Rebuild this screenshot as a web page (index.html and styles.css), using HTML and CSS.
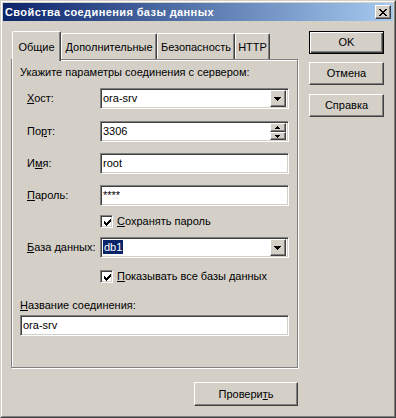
FILE: index.html
```html
<!DOCTYPE html>
<html>
<head>
<meta charset="utf-8">
<link rel="stylesheet" href="styles.css">
</head>
<body>
<div class="window">
  <div class="frame">
    <div class="titlebar">
      <span class="title">Свойства соединения базы данных</span>
      <div class="close raised">
        <svg width="8" height="7" viewBox="0 0 8 7" shape-rendering="crispEdges"><path d="M0 0h2v1h-2zM6 0h2v1h-2zM1 1h2v1h-2zM5 1h2v1h-2zM2 2h4v1h-4zM3 3h2v1h-2zM2 4h4v1h-4zM1 5h2v1h-2zM5 5h2v1h-2zM0 6h2v1h-2zM6 6h2v1h-2z" fill="#000"/></svg>
      </div>
    </div>
    <div class="body">
      <div class="left">
        <div class="tabs">
          <div class="tab active w1">Общие</div>
          <div class="tab w2">Дополнительные</div>
          <div class="tab w3">Безопасность</div>
          <div class="tab w4">HTTP</div>
        </div>
        <div class="panel">
          <div class="hint">Укажите параметры соединения с сервером:</div>
          <div class="row r-host">
            <span class="label"><u>Х</u>ост:</span>
            <div class="field sunken">
              <span class="value">ora-srv</span>
              <div class="dropbtn raised">
                <svg width="7" height="4" viewBox="0 0 7 4" shape-rendering="crispEdges"><path d="M0 0h7v1h-7zM1 1h5v1h-5zM2 2h3v1h-3zM3 3h1v1h-1z" fill="#000"/></svg>
              </div>
            </div>
          </div>
          <div class="row r-port">
            <span class="label">По<u>р</u>т:</span>
            <div class="field sunken">
              <span class="value">3306</span>
              <div class="spin">
                <div class="spinbtn raised"><svg width="5" height="3" viewBox="0 0 5 3" shape-rendering="crispEdges"><path d="M2 0h1v1h-1zM1 1h3v1h-3zM0 2h5v1h-5z" fill="#000"/></svg></div>
                <div class="spinbtn raised"><svg width="5" height="3" viewBox="0 0 5 3" shape-rendering="crispEdges"><path d="M0 0h5v1h-5zM1 1h3v1h-3zM2 2h1v1h-1z" fill="#000"/></svg></div>
              </div>
            </div>
          </div>
          <div class="row r-name">
            <span class="label">И<u>м</u>я:</span>
            <div class="field sunken"><span class="value">root</span></div>
          </div>
          <div class="row r-pass">
            <span class="label"><u>П</u>ароль:</span>
            <div class="field sunken"><span class="value">****</span></div>
          </div>
          <div class="check r-chk1">
            <div class="box sunken">
              <svg width="7" height="7" viewBox="0 0 7 7" shape-rendering="crispEdges"><path d="M6 0h1v1h-1zM5 1h2v1h-2zM0 2h1v1h-1zM4 2h3v1h-3zM0 3h2v1h-2zM3 3h3v1h-3zM0 4h5v1h-5zM1 5h3v1h-3zM2 6h1v1h-1z" fill="#000"/></svg>
            </div>
            <span><u>С</u>охранять пароль</span>
          </div>
          <div class="row r-db">
            <span class="label"><u>Б</u>аза данных:</span>
            <div class="field sunken">
              <span class="value"><span class="sel">db1</span></span>
              <div class="dropbtn raised">
                <svg width="7" height="4" viewBox="0 0 7 4" shape-rendering="crispEdges"><path d="M0 0h7v1h-7zM1 1h5v1h-5zM2 2h3v1h-3zM3 3h1v1h-1z" fill="#000"/></svg>
              </div>
            </div>
          </div>
          <div class="check r-chk2">
            <div class="box sunken">
              <svg width="7" height="7" viewBox="0 0 7 7" shape-rendering="crispEdges"><path d="M6 0h1v1h-1zM5 1h2v1h-2zM0 2h1v1h-1zM4 2h3v1h-3zM0 3h2v1h-2zM3 3h3v1h-3zM0 4h5v1h-5zM1 5h3v1h-3zM2 6h1v1h-1z" fill="#000"/></svg>
            </div>
            <span><u>П</u>оказывать все базы данных</span>
          </div>
          <div class="conn-label"><u>Н</u>азвание соединения:</div>
          <div class="field sunken wide-field"><span class="value">ora-srv</span></div>
        </div>
        <div class="footer">
          <div class="btn raised check-btn">Провери<u>т</u>ь</div>
        </div>
      </div>
      <div class="right">
        <div class="btn default">OK</div>
        <div class="btn raised b-cancel">Отмена</div>
        <div class="btn raised">Справка</div>
      </div>
    </div>
  </div>
</div>
</body>
</html>
```
FILE: styles.css
```css
* { box-sizing: border-box; }
html, body { margin: 0; padding: 0; background: #D4D0C8; }
body {
  font-family: "Liberation Sans", Arial, sans-serif;
  font-size: 11px;
  color: #000;
}
.window {
  width: 396px;
  height: 418px;
  border: 1px solid;
  border-color: #D4D0C8 #404040 #404040 #D4D0C8;
  background: #D4D0C8;
}
.frame {
  height: 100%;
  border: 1px solid;
  border-color: #FFFFFF #808080 #808080 #FFFFFF;
  padding: 1px;
  display: flex;
  flex-direction: column;
}
.titlebar {
  height: 18px;
  flex: none;
  background: linear-gradient(to right, #0A246A, #A6CAF0);
  display: flex;
  align-items: center;
  justify-content: space-between;
  padding: 0 2px 0 2px;
}
.title {
  color: #fff;
  font-weight: bold;
  font-size: 11px;
  line-height: 13px;
  letter-spacing: 0.4px;
}
.raised {
  background: #D4D0C8;
  border: 1px solid;
  border-color: #FFFFFF #404040 #404040 #FFFFFF;
  box-shadow: inset -1px -1px #808080;
}
.sunken {
  background: #fff;
  border: 1px solid;
  border-color: #808080 #FFFFFF #FFFFFF #808080;
  box-shadow: inset 1px 1px #404040, inset -1px -1px #D4D0C8;
}
.close {
  width: 16px;
  height: 14px;
  display: flex;
  align-items: center;
  justify-content: center;
  padding-right: 1px;
}
.close svg { display: block; }
.body {
  flex: 1;
  display: flex;
  padding: 10px 0 0 8px;
}
.left {
  width: 288px;
  display: flex;
  flex-direction: column;
}
.tabs {
  height: 28px;
  display: flex;
  align-items: flex-end;
  padding-left: 1px;
}
.tab {
  height: 26px;
  border-top: 1px solid #fff;
  border-left: 1px solid #fff;
  border-right: 1px solid #404040;
  box-shadow: inset -1px 0 #808080;
  border-radius: 2px 2px 0 0;
  padding-top: 7px;
  line-height: 13px;
  text-align: center;
  background: #D4D0C8;
}
.tab.active {
  height: 30px;
  margin-bottom: -2px;
  padding-top: 9px;
  z-index: 1;
}
.w1 { width: 49px; }
.w2 { width: 96px; }
.w3 { width: 78px; }
.w4 { width: 35px; }
.panel {
  width: 287px;
  height: 309px;
  border: 1px solid #808080;
  box-shadow: inset 1px 1px #fff, 1px 1px #fff;
  padding: 6px 0 0 8px;
  display: flex;
  flex-direction: column;
}
.hint { line-height: 13px; }
.row {
  display: flex;
  align-items: center;
  height: 21px;
}
.label {
  width: 80px;
  padding-left: 7px;
  line-height: 13px;
}
.field {
  width: 189px;
  height: 21px;
  display: flex;
  align-items: center;
  justify-content: space-between;
  padding: 2px;
}
.value {
  line-height: 13px;
  padding-left: 0px;
}
.sel {
  background: #0A246A;
  color: #fff;
  padding: 1px 1px;
}
.dropbtn {
  width: 16px;
  height: 17px;
  display: flex;
  align-items: center;
  justify-content: center;
  padding-right: 1px;
}
.dropbtn svg, .spinbtn svg, .box svg { display: block; }
.spin {
  display: flex;
  flex-direction: column;
  height: 17px;
}
.spinbtn {
  width: 16px;
  height: 9px;
  display: flex;
  align-items: center;
  justify-content: center;
  padding-right: 1px;
}
.spinbtn + .spinbtn { height: 8px; }
.check {
  display: flex;
  align-items: center;
  height: 13px;
  padding-left: 80px;
  gap: 4px;
  line-height: 13px;
}
.box {
  width: 13px;
  height: 13px;
  display: flex;
  align-items: center;
  justify-content: center;
  padding-left: 1px;
  padding-top: 1px;
}
.r-host { margin-top: 9px; }
.r-port { margin-top: 12px; }
.r-name { margin-top: 11px; }
.r-pass { margin-top: 11px; }
.r-chk1 { margin-top: 9px; }
.r-db { margin-top: 9px; }
.r-chk2 { margin-top: 12px; }
.conn-label { margin-top: 16px; line-height: 13px; }
.wide-field { width: 269px; margin-top: 3px; }
.footer {
  display: flex;
  justify-content: flex-end;
  margin-top: 14px;
  padding-right: 1px;
}
.btn {
  width: 75px;
  height: 23px;
  display: flex;
  align-items: center;
  justify-content: center;
  line-height: 13px;
}
.check-btn { width: 104px; height: 24px; }
.right {
  display: flex;
  flex-direction: column;
  margin-left: 10px;
}
.default {
  border: 1px solid #000;
  box-shadow: inset 1px 1px #fff, inset -1px -1px #404040, inset -2px -2px #808080;
  margin-bottom: 8px;
}
.b-cancel { margin-bottom: 9px; }
```
